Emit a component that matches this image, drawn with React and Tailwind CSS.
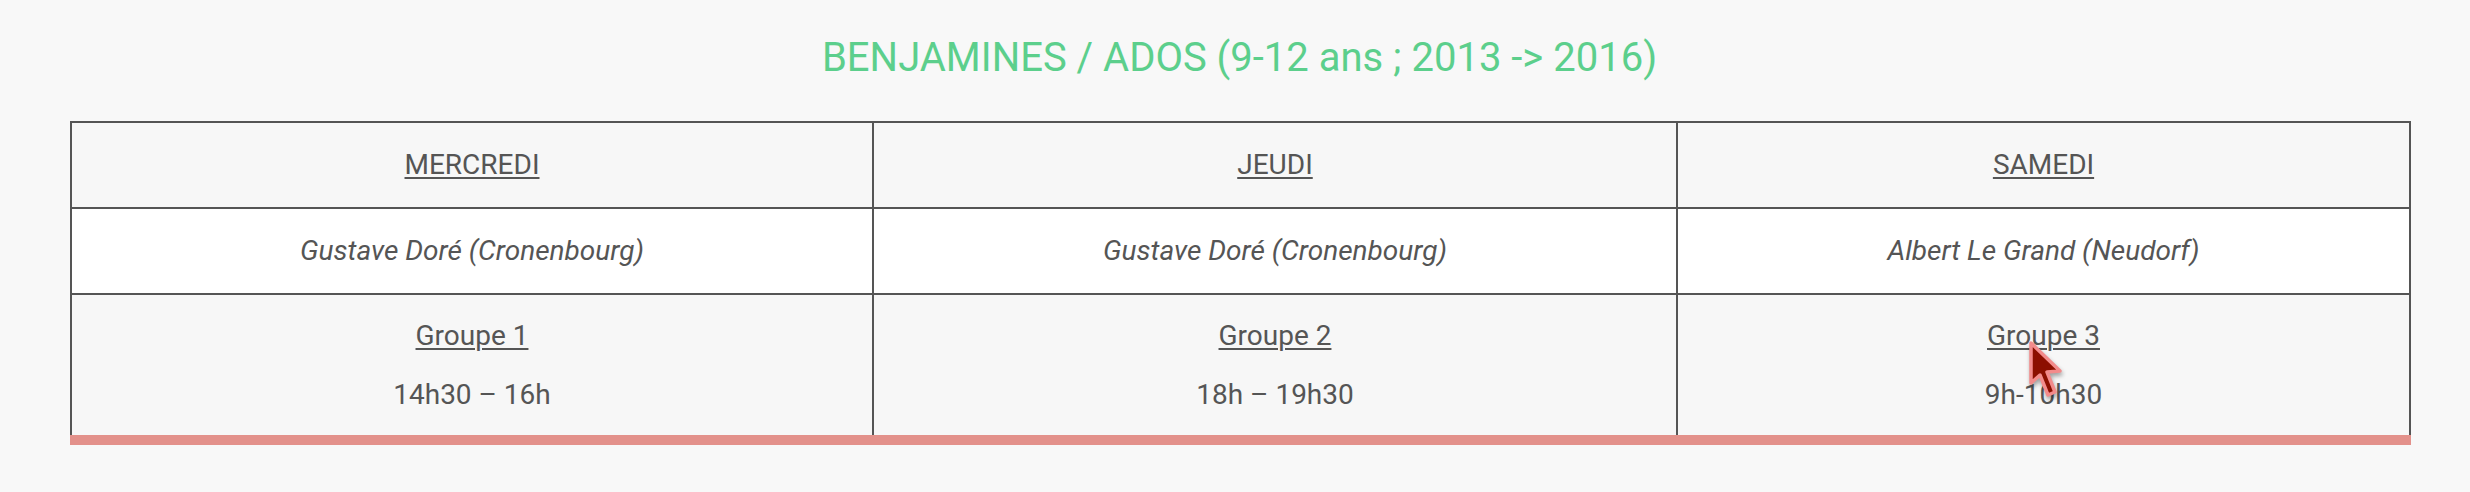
const DAYS = [
  { day: "MERCREDI", place: "Gustave Doré (Cronenbourg)", group: "Groupe 1", time: "14h30 – 16h" },
  { day: "JEUDI", place: "Gustave Doré (Cronenbourg)", group: "Groupe 2", time: "18h – 19h30" },
  { day: "SAMEDI", place: "Albert Le Grand (Neudorf)", group: "Groupe 3", time: "9h-10h30" },
];

// mouse pointer caught in the screenshot, drawn over the table
function Pointer() {
  return (
    <svg
      width="40"
      height="62"
      viewBox="0 0 40 62"
      className="absolute left-[2026px] top-[338px] drop-shadow-[1px_3px_2px_rgba(0,0,0,0.35)] pointer-events-none"
    >
      <path
        d="M5 5 L5 45 L14 37 L22 57 L29 54 L21 34 L34 33 Z"
        fill="#8c0f00"
        stroke="#f38b8b"
        strokeWidth="3.5"
        strokeLinejoin="round"
      />
    </svg>
  );
}

export default function App() {
  return (
    <div className="relative h-[492px] w-[2470px] overflow-hidden bg-[#f8f8f8] font-['Roboto',sans-serif] text-[#555]">
      <h2 className="pt-[34px] pl-[9px] text-center text-[40px] leading-[48px] font-normal text-[#5ccf8c]">
        BENJAMINES / ADOS (9-12 ans ; 2013 -&gt; 2016)
      </h2>

      <table className="mt-[39px] ml-[70px] w-[2339px] table-fixed border-collapse">
        <colgroup>
          <col className="w-[802px]" />
          <col className="w-[804px]" />
          <col className="w-[733px]" />
        </colgroup>
        <tbody>
          <tr className="bg-[#f7f7f7]">
            {DAYS.map((d) => (
              <td key={d.day} className="border-2 border-[#555] p-0">
                <div className="h-[84px] flex items-center justify-center text-[28px] underline decoration-[2px] underline-offset-[3px]">
                  {d.day}
                </div>
              </td>
            ))}
          </tr>
          <tr className="bg-white">
            {DAYS.map((d) => (
              <td key={d.day} className="border-2 border-[#555] p-0">
                <div className="h-[84px] flex items-center justify-center text-[28px] italic">{d.place}</div>
              </td>
            ))}
          </tr>
          <tr className="bg-[#f7f7f7]">
            {DAYS.map((d) => (
              <td key={d.day} className="border-2 border-b-[10px] border-[#555] border-b-[#e3918b] p-0">
                <div className="h-[140px] flex flex-col items-center justify-center gap-[17px] text-[28px] leading-[42px]">
                  <span className="underline decoration-[2px] underline-offset-[3px]">{d.group}</span>
                  <span>{d.time}</span>
                </div>
              </td>
            ))}
          </tr>
        </tbody>
      </table>

      <Pointer />
    </div>
  );
}
